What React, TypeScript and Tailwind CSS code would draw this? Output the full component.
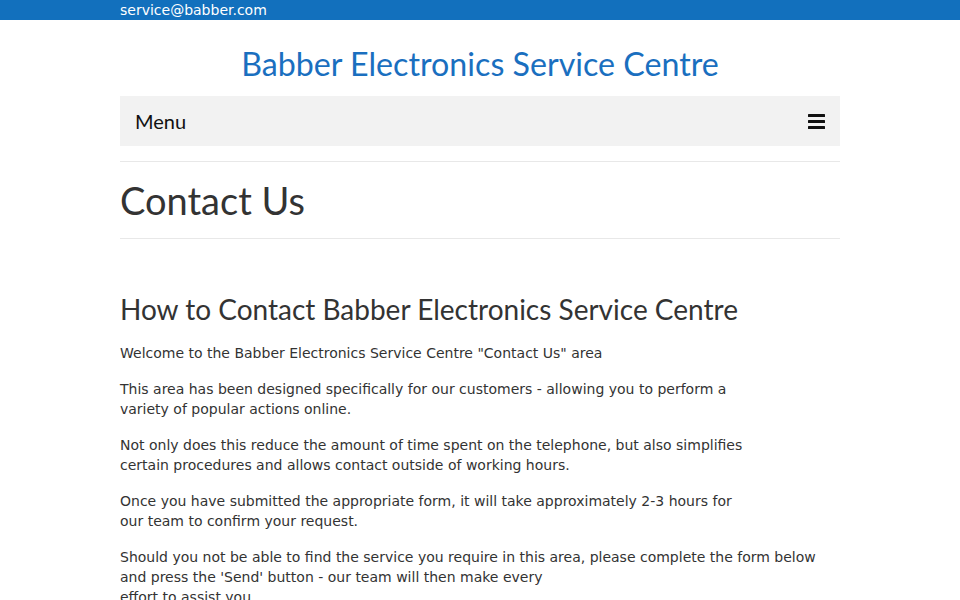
export default function App() {
  return (
    <div className="min-h-screen bg-white">
      <div className="h-[20px] bg-[#1270bd]">
        <div className="mx-auto w-[720px] text-[14px] leading-[20px] text-white font-['DejaVu_Sans',sans-serif]">
          service@babber.com
        </div>
      </div>
      <div className="mx-auto w-[720px]">
        <div className="pt-[24px] pb-[12px] text-center font-['Lato',sans-serif] text-[32.2px] leading-[40px] text-[#1a6fbf]">
          Babber Electronics Service Centre
        </div>
        <div className="flex h-[50px] items-center justify-between bg-[#f2f2f2] px-[15px]">
          <span className="font-['Lato',sans-serif] text-[20px] text-[#111]">Menu</span>
          <svg width="17" height="15" viewBox="0 0 17 15">
            <rect x="0" y="0" width="17" height="3" rx="0.5" fill="#111" />
            <rect x="0" y="6" width="17" height="3" rx="0.5" fill="#111" />
            <rect x="0" y="12" width="17" height="3" rx="0.5" fill="#111" />
          </svg>
        </div>
        <div className="mt-[15px] border-t border-[#e8e8e8]" />
        <h1 className="py-[14px] font-['Lato',sans-serif] text-[38px] leading-[48px] text-[#333]">Contact Us</h1>
        <div className="border-t border-[#e8e8e8]" />
        <h2 className="mt-[50px] font-['Lato',sans-serif] text-[28px] leading-[40px] text-[#333]">
          How to Contact Babber Electronics Service Centre
        </h2>
        <div className="mt-[14px] font-['DejaVu_Sans',sans-serif] text-[14px] leading-[20px] text-[#333] flex flex-col gap-[16px]">
          <p>Welcome to the Babber Electronics Service Centre "Contact Us" area</p>
          <p>
            This area has been designed specifically for our customers - allowing you to perform a
            <br />
            variety of popular actions online.
          </p>
          <p>
            Not only does this reduce the amount of time spent on the telephone, but also simplifies
            <br />
            certain procedures and allows contact outside of working hours.
          </p>
          <p>
            Once you have submitted the appropriate form, it will take approximately 2-3 hours for
            <br />
            our team to confirm your request.
          </p>
          <p>
            Should you not be able to find the service you require in this area, please complete the form below
            <br />
            and press the 'Send' button - our team will then make every
            <br />
            effort to assist you.
          </p>
        </div>
      </div>
    </div>
  );
}
